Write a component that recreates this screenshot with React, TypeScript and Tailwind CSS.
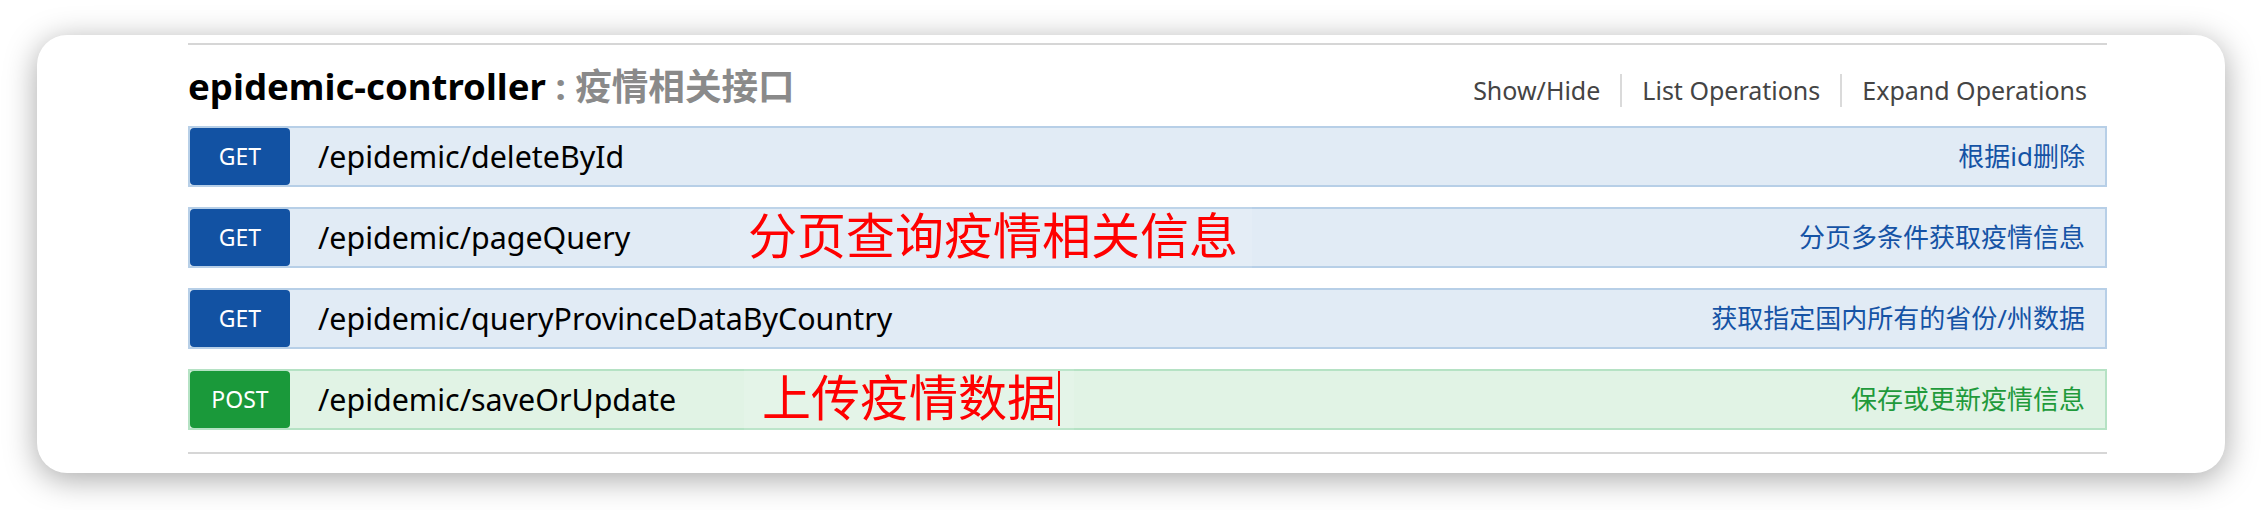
const FONT = '"Noto Sans", "Noto Sans CJK SC", sans-serif';

type Op = {
  method: "GET" | "POST";
  path: string;
  summary: string;
};

type Note = { text: string; left: string; caret?: boolean };

const OPERATIONS: Op[] = [
  { method: "GET", path: "/epidemic/deleteById", summary: "根据id删除" },
  { method: "GET", path: "/epidemic/pageQuery", summary: "分页多条件获取疫情信息" },
  {
    method: "GET",
    path: "/epidemic/queryProvinceDataByCountry",
    summary: "获取指定国内所有的省份/州数据",
  },
  { method: "POST", path: "/epidemic/saveOrUpdate", summary: "保存或更新疫情信息" },
];

// red annotations typed over the screenshot
const NOTES: Record<number, Note> = {
  1: { text: "分页查询疫情相关信息", left: "left-[540px]" },
  3: { text: "上传疫情数据", left: "left-[554px]", caret: true },
};

function OperationRow({ op, note }: { op: Op; note?: Note }) {
  const isGet = op.method === "GET";
  return (
    <div
      className={`relative flex h-[61px] items-stretch border-2 ${
        isGet ? "border-[#b7cfe7] bg-[#e1ebf5]" : "border-[#b5e2c4] bg-[#e1f3e5]"
      }`}
    >
      <span
        className={`flex w-[100px] items-center justify-center rounded-[4px] text-[23px] text-white ${
          isGet ? "bg-[#1252a3]" : "bg-[#1a993a]"
        }`}
      >
        {op.method}
      </span>
      <span className="ml-[28px] flex items-center text-[30.4px] text-black">{op.path}</span>
      {note && (
        <span
          className={`absolute top-[-12px] flex h-[78px] items-center bg-white/10 pl-[18px] pr-[14px] text-[49px] text-[#ff0000] ${note.left}`}
        >
          {note.text}
          {note.caret && <span className="ml-[2px] h-[55px] w-[2px] bg-[#ff0000]" />}
        </span>
      )}
      <span
        className={`ml-auto flex items-center pr-[20px] text-[26px] ${
          isGet ? "text-[#1553a5]" : "text-[#1f9a3b]"
        }`}
      >
        {op.summary}
      </span>
    </div>
  );
}

export default function App() {
  return (
    <div className="h-[510px] w-[2262px] bg-white pt-[35px]" style={{ fontFamily: FONT }}>
      <div className="mx-[37px] h-[438px] rounded-[30px] bg-white pl-[151px] pr-[118px] pt-[8px] shadow-[0_6px_32px_rgba(0,0,0,0.35)]">
        <div className="h-[2px] bg-[#d6d6d6]" />

        <div className="flex h-[81px] items-center justify-between">
          <h2 className="pt-[2px] text-[36.6px] font-bold leading-none text-black">
            epidemic-controller
            <span className="text-[#8a8a8a]"> : 疫情相关接口</span>
          </h2>
          <div className="flex items-center pt-[10px] text-[25px] text-[#444444]">
            <span className="pr-[20px]">Show/Hide</span>
            <span className="h-[33px] w-[2px] bg-[#dadada]" />
            <span className="px-[20px]">List Operations</span>
            <span className="h-[33px] w-[2px] bg-[#dadada]" />
            <span className="pl-[20px] pr-[20px]">Expand Operations</span>
          </div>
        </div>

        <div className="flex flex-col gap-[20px]">
          {OPERATIONS.map((op, i) => (
            <OperationRow key={op.path} op={op} note={NOTES[i]} />
          ))}
        </div>

        <div className="mt-[22px] h-[2px] bg-[#d6d6d6]" />
      </div>
    </div>
  );
}
